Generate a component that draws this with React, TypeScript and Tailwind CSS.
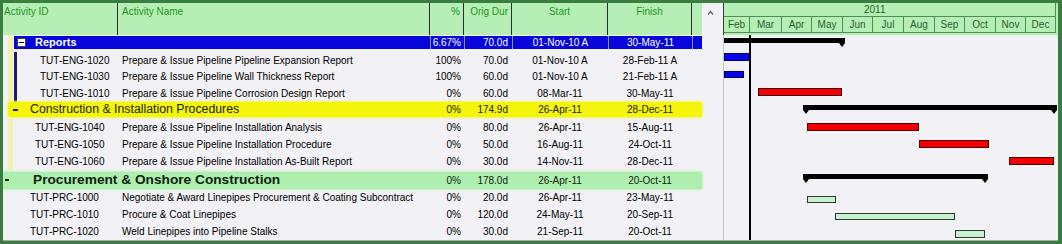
import type { ReactNode } from "react"

type Vals = { pct: string; dur: string; start: string; finish: string }

function Cells({ pct, dur, start, finish, blue }: Vals & { blue?: boolean }) {
  const sep = blue ? "border-l border-[#8c8cff]" : ""
  return (
    <>
      <div className={`w-[34px] h-full flex items-center justify-end pr-[3px] ${sep}`}>{pct}</div>
      <div className={`w-[48px] h-full flex items-center justify-end pr-[4px] ${sep}`}>{dur}</div>
      <div className={`w-[96px] h-full flex items-center justify-center ${sep}`}>{start}</div>
      <div className={`w-[84px] h-full flex items-center justify-center ${sep}`}>{finish}</div>
      <div className={`w-[10px] h-full ${sep}`} />
    </>
  )
}

const Blank = ({ w }: { w: string }) => <div className={`${w} h-full`} />
const Pale = () => <div className="w-[5px] h-full bg-[#f2f2b0]" />
const Navy = () => <div className="w-[3px] h-full bg-[#1c1c6a]" />

function Task({
  lead,
  idW,
  idPad,
  id,
  name,
  v,
}: {
  lead: ReactNode
  idW: string
  idPad: string
  id: string
  name: string
  v: Vals
}) {
  return (
    <div className="flex h-[17px] text-[10px] text-black">
      {lead}
      <div className={`${idW} ${idPad} h-full flex items-center whitespace-nowrap`}>{id}</div>
      <div className="w-[312px] pl-[4px] h-full flex items-center whitespace-nowrap">{name}</div>
      <Cells {...v} />
    </div>
  )
}

function TableHeader() {
  const cell = "h-full border-r border-[#2c2c2c] pt-[3px] leading-[12px]"
  return (
    <div className="flex h-[32px] bg-[#b6efb6] text-[10px] text-[#1f961f]">
      <div className={`w-[115px] pl-[1px] ${cell}`}>Activity ID</div>
      <div className={`w-[312px] pl-[4px] ${cell}`}>Activity Name</div>
      <div className={`w-[34px] text-right pr-[3px] ${cell}`}>%</div>
      <div className={`w-[48px] text-right pr-[3px] ${cell}`}>Orig Dur</div>
      <div className={`w-[96px] text-center ${cell}`}>Start</div>
      <div className={`w-[84px] text-center ${cell}`}>Finish</div>
      <div className="w-[10px] h-full" />
    </div>
  )
}

function Table() {
  const reportLead = (
    <>
      <Blank w="w-[5px]" />
      <Pale />
      <Blank w="w-[1px]" />
      <Navy />
    </>
  )
  const constrLead = (
    <>
      <Blank w="w-[5px]" />
      <Pale />
    </>
  )
  return (
    <div className="w-[699px] flex flex-col">
      <TableHeader />

      {/* Reports */}
      <div className="flex h-[17px]">
        <Blank w="w-[5px]" />
        <Pale />
        <Blank w="w-[1px]" />
        <div className="flex mt-[1px] h-[13px] bg-[#0505dc] text-white text-[10px]">
          <div className="w-[416px] flex items-center pl-[3px]">
            <div className="w-[9px] h-[9px] bg-white border border-[#404040] flex items-center justify-center">
              <div className="w-[5px] h-[1px] bg-black" />
            </div>
            <span className="ml-[9px] font-bold text-[11px]">Reports</span>
          </div>
          <Cells pct="6.67%" dur="70.0d" start="01-Nov-10 A" finish="30-May-11" blue />
        </div>
      </div>

      <Task lead={reportLead} idW="w-[101px]" idPad="pl-[23px]" id="TUT-ENG-1020" name="Prepare & Issue Pipeline Pipeline Expansion Report" v={{ pct: "100%", dur: "70.0d", start: "01-Nov-10 A", finish: "28-Feb-11 A" }} />
      <Task lead={reportLead} idW="w-[101px]" idPad="pl-[23px]" id="TUT-ENG-1030" name="Prepare & Issue Pipeline Wall Thickness Report" v={{ pct: "100%", dur: "60.0d", start: "01-Nov-10 A", finish: "21-Feb-11 A" }} />
      <Task lead={reportLead} idW="w-[101px]" idPad="pl-[23px]" id="TUT-ENG-1010" name="Prepare & Issue Pipeline Corrosion Design Report" v={{ pct: "0%", dur: "60.0d", start: "08-Mar-11", finish: "30-May-11" }} />

      {/* Construction & Installation Procedures */}
      <div className="flex h-[17px]">
        <Blank w="w-[5px]" />
        <div className="flex h-[15px] bg-[#f5f50c] shadow-[0_0_2px_1px_#f7f760] text-[10px] text-[#1a1a00] rounded-[2px]">
          <div className="w-[422px] flex items-center pl-[5px]">
            <div className="w-[5px] h-[2px] bg-[#202000]" />
            <span className="ml-[12px] text-[12.3px] whitespace-nowrap">Construction &amp; Installation Procedures</span>
          </div>
          <Cells pct="0%" dur="174.9d" start="26-Apr-11" finish="28-Dec-11" />
        </div>
      </div>

      <Task lead={constrLead} idW="w-[105px]" idPad="pl-[22px]" id="TUT-ENG-1040" name="Prepare & Issue Pipeline Installation Analysis" v={{ pct: "0%", dur: "80.0d", start: "26-Apr-11", finish: "15-Aug-11" }} />
      <Task lead={constrLead} idW="w-[105px]" idPad="pl-[22px]" id="TUT-ENG-1050" name="Prepare & Issue Pipeline Installation Procedure" v={{ pct: "0%", dur: "50.0d", start: "16-Aug-11", finish: "24-Oct-11" }} />
      <Task lead={constrLead} idW="w-[105px]" idPad="pl-[22px]" id="TUT-ENG-1060" name="Prepare & Issue Pipeline Installation As-Built Report" v={{ pct: "0%", dur: "30.0d", start: "14-Nov-11", finish: "28-Dec-11" }} />

      {/* Procurement & Onshore Construction */}
      <div className="flex h-[20px]">
        <div className="flex mt-[2px] h-[17px] w-[699px] bg-[#aeeeae] shadow-[0_0_2px_1px_#bdf3bd] text-[10px] text-[#0c240c] rounded-[2px]">
          <div className="w-[427px] flex items-center pl-[2px]">
            <div className="w-[4px] h-[2px] bg-[#143014]" />
            <span className="ml-[24px] font-bold text-[13.7px] whitespace-nowrap">Procurement &amp; Onshore Construction</span>
          </div>
          <Cells pct="0%" dur="178.0d" start="26-Apr-11" finish="20-Oct-11" />
        </div>
      </div>

      <Task lead={null} idW="w-[115px]" idPad="pl-[27px]" id="TUT-PRC-1000" name="Negotiate & Award Linepipes Procurement & Coating Subcontract" v={{ pct: "0%", dur: "20.0d", start: "26-Apr-11", finish: "23-May-11" }} />
      <Task lead={null} idW="w-[115px]" idPad="pl-[27px]" id="TUT-PRC-1010" name="Procure & Coat Linepipes" v={{ pct: "0%", dur: "120.0d", start: "24-May-11", finish: "20-Sep-11" }} />
      <Task lead={null} idW="w-[115px]" idPad="pl-[27px]" id="TUT-PRC-1020" name="Weld Linepipes into Pipeline Stalks" v={{ pct: "0%", dur: "30.0d", start: "21-Sep-11", finish: "20-Oct-11" }} />
    </div>
  )
}

const months = [
  { m: "Feb", w: "w-[26px]" },
  { m: "Mar", w: "w-[32px]" },
  { m: "Apr", w: "w-[30px]" },
  { m: "May", w: "w-[31px]" },
  { m: "Jun", w: "w-[30px]" },
  { m: "Jul", w: "w-[31px]" },
  { m: "Aug", w: "w-[31px]" },
  { m: "Sep", w: "w-[30px]" },
  { m: "Oct", w: "w-[31px]" },
  { m: "Nov", w: "w-[30px]" },
  { m: "Dec", w: "w-[30px]" },
]

type Bar = { x: number; y: number; w: number; h: number; kind: "blue" | "red" | "green" }

const bars: Bar[] = [
  { x: 1, y: 18, w: 26, h: 8, kind: "blue" },
  { x: 1, y: 36, w: 20, h: 7, kind: "blue" },
  { x: 35, y: 53, w: 84, h: 8, kind: "red" },
  { x: 84, y: 88, w: 112, h: 8, kind: "red" },
  { x: 196, y: 105, w: 70, h: 8, kind: "red" },
  { x: 286, y: 122, w: 45, h: 8, kind: "red" },
  { x: 84, y: 161, w: 29, h: 7, kind: "green" },
  { x: 112, y: 178, w: 120, h: 7, kind: "green" },
  { x: 232, y: 195, w: 30, h: 8, kind: "green" },
]

const barFill = { blue: "#0606e6", red: "#f00000", green: "#c6f2d0" }
const barStroke = { blue: "#000070", red: "#4a0000", green: "#303830" }

function Summary({ x1, x2, y, left = true }: { x1: number; x2: number; y: number; left?: boolean }) {
  return (
    <g fill="#000">
      <rect x={x1} y={y} width={x2 - x1} height={5} />
      {left && <polygon points={`${x1},${y + 5} ${x1 + 6},${y + 5} ${x1 + 3},${y + 9}`} />}
      <polygon points={`${x2 - 6},${y + 5} ${x2},${y + 5} ${x2 - 3},${y + 9}`} />
    </g>
  )
}

function Gantt() {
  return (
    <div className="w-[335px] flex flex-col">
      <div className="h-[32px] bg-[#b6efb6] border-l border-[#3a3a3a] flex flex-col text-[10px] text-[#2b612b]">
        <div className="h-[14px] w-[332px] border-b border-r border-[#4f8f4f] flex items-center pl-[140px]">2011</div>
        <div className="flex h-[16px] w-[332px] border-b border-[#4f8f4f]">
          {months.map((mo) => (
            <div key={mo.m} className={`${mo.w} h-full border-r border-[#4f8f4f] flex items-center justify-center`}>
              {mo.m}
            </div>
          ))}
        </div>
      </div>
      <svg width={335} height={206} className="block">
        <rect x={0} y={0} width={1} height={206} fill="#c4c4c4" />
        <Summary x1={1} x2={122} y={3} left={false} />
        <Summary x1={80} x2={334} y={70} />
        <Summary x1={80} x2={265} y={139} />
        {bars.map((b, i) => (
          <rect
            key={i}
            x={b.x + 0.5}
            y={b.y + 0.5}
            width={b.w - 1}
            height={b.h - 1}
            fill={barFill[b.kind]}
            stroke={barStroke[b.kind]}
            strokeWidth={1}
          />
        ))}
        <rect x={26} y={0} width={2} height={206} fill="#000" />
      </svg>
    </div>
  )
}

export default function App() {
  return (
    <div className="w-[1062px] h-[244px] bg-[#3a7d41] pt-[3px] pl-[3px] pr-[4px] pb-[3px] font-['Liberation_Sans',Arial,sans-serif]">
      <div className="h-full flex bg-[#f2f1f5] border-b border-[#a8a8a8] overflow-hidden">
        <Table />
        <div className="w-[21px] h-full">
          <svg width={21} height={20} className="block">
            <path d="M6 11.5 L8.5 8.5 L11 11.5" fill="none" stroke="#606060" strokeWidth={1.2} />
          </svg>
        </div>
        <Gantt />
      </div>
    </div>
  )
}
